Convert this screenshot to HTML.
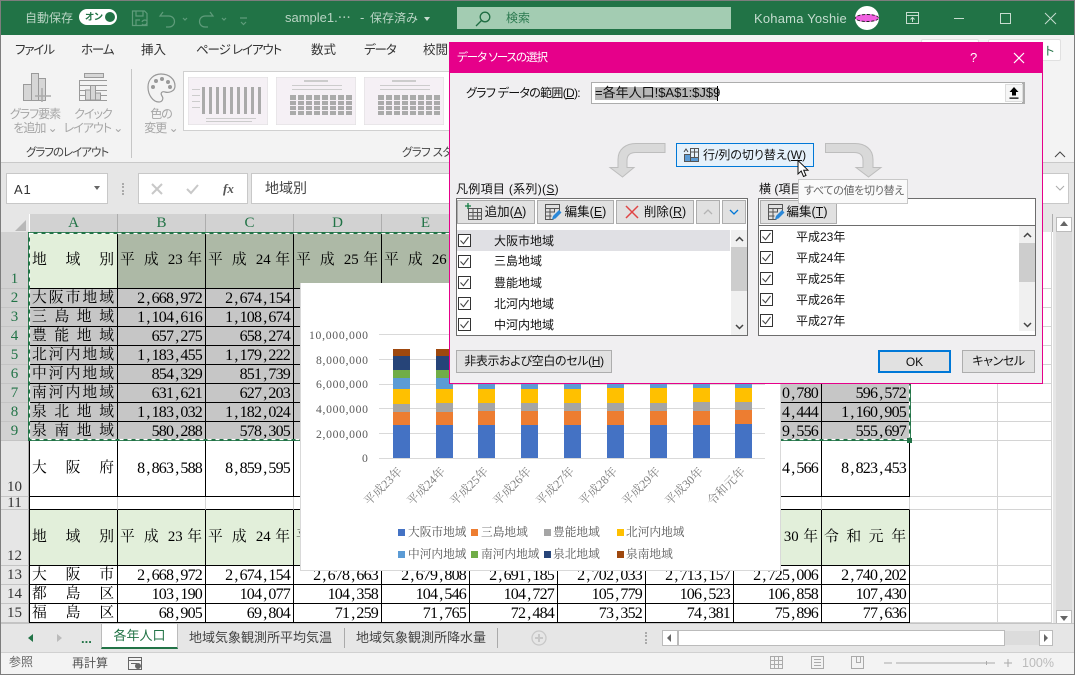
<!DOCTYPE html>
<html lang="ja"><head><meta charset="utf-8"><title>Excel</title>
<style>
*{box-sizing:border-box}
html,body{margin:0;padding:0}
body{width:1075px;height:675px;position:relative;overflow:hidden;background:#e6e6e6;font-family:"Liberation Sans","Noto Sans CJK JP",sans-serif;font-size:12px;color:#222;font-feature-settings:"palt"}
.a{position:absolute;white-space:nowrap}
svg{position:absolute;overflow:visible}
#sheet{position:absolute;left:0;top:214px;width:1053px;height:409px;overflow:hidden;background:#fff}
table{position:absolute;left:29px;top:18px;border-collapse:separate;border-spacing:0;table-layout:fixed;width:1023px;font-family:"Liberation Serif","Noto Serif CJK JP",serif;font-size:16px;letter-spacing:-.8px;color:#000;font-feature-settings:normal}
td{border-right:1px solid #000;border-bottom:1px solid #000;padding:0 3px 0 2px;overflow:hidden;white-space:nowrap;text-align:right;line-height:15px}
td:first-child{border-left:1px solid #000}
td.g{border-right-color:#d4d4d4}
td.n{border-right-color:#d4d4d4;border-bottom-color:#d4d4d4}
td.h{background:#adb9a6}
td.s{background:#c6c6c6}
td.l{background:#e2efda}
td.j{text-align:justify;text-align-last:justify;word-spacing:-3.7px;font-size:14.8px;letter-spacing:0}
td i{font-style:normal;margin:0 2px}
.rh{position:absolute;left:1px;width:28px;background:#e6e6e6;border-bottom:1px solid #c4c4c4;border-right:1px solid #ababab;font-family:"Liberation Serif",serif;font-size:15px;text-align:center;color:#333;line-height:17px;display:flex;align-items:flex-end;justify-content:center}
.rh.on{background:#d2d2d2;color:#217346;border-right-color:#adadad}
.ch{position:absolute;top:0;height:18px;width:88px;background:#d2d2d2;border-right:1px solid #adadad;color:#217346;font-family:"Liberation Serif",serif;font-size:15px;text-align:center;line-height:19px}
.btn{position:absolute;background:#e1e1e1;border:1px solid #adadad;color:#111;text-align:center;white-space:nowrap}
.u{text-decoration:underline}
.lb{position:absolute;white-space:nowrap;color:#111;font-size:12px;line-height:16px}
.rb{position:absolute;text-align:center;color:#a6a6a6;font-size:12px;line-height:14px;white-space:nowrap;letter-spacing:-1px}
.tab{position:absolute;top:50px;white-space:nowrap;color:#333;font-size:12.500px;line-height:1;transform:translateY(-6px)}
.k{letter-spacing:-1.100px}
</style></head><body>
<svg width="0" height="0" style="position:absolute"><defs>
<symbol id="ck" viewBox="0 0 13 13"><rect x=".5" y=".5" width="12" height="12" fill="#fff" stroke="#333"/><path d="M2.5 6.5l3 3.2 5-6.7" fill="none" stroke="#444" stroke-width="1.1"/></symbol>
<symbol id="ed" viewBox="0 0 18 18"><path d="M1.5 1.5h14v4h-14zM1.500 5.500v11h8M6 5.500v11M10.500 5.500v4M15.500 5.500v3M1.500 9h9M1.500 13h6" fill="none" stroke="#555"/><path d="M8 16.500l1-3.500 6-6 2.500 2.500-6 6z" fill="#2b88d8"/></symbol>
<symbol id="th" viewBox="0 0 80 48"><rect width="80" height="48" fill="#f5f0f5" stroke="#ddd"/><g fill="#aaa"><rect x="14" y="10" width="3" height="27"/><rect x="21" y="10" width="3" height="27"/><rect x="28" y="10" width="3" height="27"/><rect x="35" y="10" width="3" height="27"/><rect x="42" y="10" width="3" height="27"/><rect x="49" y="10" width="3" height="27"/><rect x="56" y="10" width="3" height="27"/><rect x="63" y="10" width="3" height="27"/><rect x="70" y="10" width="3" height="27"/></g><g fill="#ccc"><rect x="18" y="41" width="50" height="1"/><rect x="18" y="44" width="46" height="1"/><rect x="4" y="12" width="8" height="1"/><rect x="4" y="18" width="8" height="1"/><rect x="4" y="24" width="8" height="1"/><rect x="4" y="30" width="8" height="1"/></g></symbol>
<symbol id="th2" viewBox="0 0 80 48"><rect width="80" height="48" fill="#f5f0f5" stroke="#ddd"/><g fill="#ccc"><rect x="28" y="3" width="24" height="2"/><rect x="16" y="8" width="50" height="1"/><rect x="16" y="12" width="50" height="1"/></g><g fill="#aaa"><rect x="14" y="18" width="6" height="20"/><rect x="22" y="18" width="6" height="20"/><rect x="30" y="18" width="6" height="20"/><rect x="38" y="18" width="6" height="20"/><rect x="46" y="18" width="6" height="20"/><rect x="54" y="18" width="6" height="20"/><rect x="62" y="18" width="6" height="20"/><rect x="70" y="18" width="6" height="20"/></g><g fill="#f5f0f5"><rect x="4" y="23" width="74" height="1"/><rect x="4" y="28" width="74" height="1"/><rect x="4" y="33" width="74" height="1"/></g></symbol>
</defs></svg>

<!-- title bar -->
<div class="a" style="left:0;top:0;width:1075px;height:35px;background:#217346"></div>
<div class="a" style="left:25px;top:10px;color:#b9d4c4;font-size:12px;line-height:16px">自動保存</div>
<div class="a" style="left:79px;top:9px;width:38px;height:16px;border-radius:8px;background:#fff"></div>
<div class="a" style="left:85px;top:11px;color:#217346;font-size:9.500px;font-weight:bold;line-height:13px">オン</div>
<div class="a" style="left:105px;top:12px;width:10px;height:10px;border-radius:5px;background:#217346"></div>
<svg style="left:131px;top:10px" width="120" height="18" fill="none" stroke="#5f9c7b" stroke-width="1.200"><path d="M1.500 1h12l2.500 2.500v12H1.500zM5 1v5h7V1M5 15v-5h4"/><path d="M11 12a3 3 0 0 1 5-1M16 13a3 3 0 0 1-5 1"/><path d="M32 2l-3 4h6M29.500 6H38a5 5 0 0 1 0 11h-3"/><path d="M52 8l2 2 2-2"/><path d="M79 2l3 4h-6M82.500 6H74a5 5 0 0 0 0 11h3"/><path d="M91 8l2 2 2-2"/><path d="M109 8h7M110 12l2.500 2.500 2.500-2.500"/></svg>
<div class="a" style="left:285px;top:10px;color:#b9d4c4;font-size:13px;line-height:16px">sample1.⋯</div>
<div class="a" style="left:360px;top:10px;color:#b9d4c4;font-size:13px;line-height:16px">-</div>
<div class="a" style="left:370px;top:10px;color:#b9d4c4;font-size:12px;line-height:16px">保存済み</div>
<div class="a" style="left:424px;top:17px;width:0;height:0;border:3.500px solid transparent;border-top:4px solid #c6dccf"></div>
<div class="a" style="left:457px;top:7px;width:274px;height:22px;background:#a3ccb2"></div>
<svg style="left:475px;top:11px" width="16" height="16" fill="none" stroke="#1f6d43" stroke-width="1.300"><circle cx="10" cy="6" r="4.800"/><path d="M6.500 9.500L1 15"/></svg>
<div class="a" style="left:506px;top:10px;color:#2c7a50;font-size:12px;line-height:16px">検索</div>
<div class="a" style="left:754px;top:11px;color:#c4dccf;font-size:13px;line-height:16px;width:89px;letter-spacing:.2px">Kohama Yoshie</div>
<div class="a" style="left:855px;top:6px;width:24px;height:24px;border-radius:12px;background:#fff"></div>
<div class="a" style="left:855px;top:14px;width:24px;height:8px;border-radius:50%;background:#f060e0;border:1px dashed #222"></div>
<svg style="left:905px;top:10px" width="150" height="16" fill="none" stroke="#c6dccf"><path d="M1.500 2.500h12v11h-12zM1.500 5.500h12M7.500 12V7.500M5.500 9.500l2-2 2 2"/><path d="M49 8.500h10"/><path d="M95.500 3.500h10v10h-10z"/><path d="M140 3l11 11M151 3l-11 11"/></svg>

<!-- ribbon -->
<div class="a" style="left:0;top:35px;width:1075px;height:128px;background:#f3f3f3;border-bottom:1px solid #c9c9c9"></div>
<div class="tab k" style="left:15px">ファイル</div>
<div class="tab k" style="left:81px">ホーム</div>
<div class="tab" style="left:141px">挿入</div>
<div class="tab k" style="left:196px">ページ レイアウト</div>
<div class="tab" style="left:311px">数式</div>
<div class="tab k" style="left:364px">データ</div>
<div class="tab" style="left:423px">校閲</div>
<div class="a" style="left:921px;top:39px;width:58px;height:22px;background:#fff;border:1px solid #e0e0e0;border-radius:2px"></div>
<div class="a" style="left:988px;top:39px;width:73px;height:22px;background:#fff;border:1px solid #e0e0e0;border-radius:2px"></div>
<div class="a" style="left:1045px;top:44px;color:#217346;font-size:12px;line-height:14px">ト</div>
<svg style="left:23px;top:72px" width="30" height="32" fill="#d6d6d6" stroke="#9a9a9a"><path d="M.5 12.500h8v16h-8zM8.500 1.500h7v27h-7zM15.500 6.500h7v22h-7z"/><path d="M19 16v14M12 24h16" stroke="#aaa" stroke-width="1.500" fill="none"/></svg>
<svg style="left:79px;top:72px" width="30" height="32" fill="none" stroke="#9a9a9a"><path d="M5.500 1.500h19v4h-19z" fill="#d6d6d6"/><path d="M1 8.500h27M1 13.500h27M1 18.500h27M1 23.500h27M.5 8v20.500h27.500"/><path d="M6.500 28v-10h5v10zM11.500 28V13.500h5V28zM16.500 28v-7h5v7z" fill="#d6d6d6"/></svg>
<svg style="left:147px;top:73px" width="30" height="30" fill="none" stroke="#999" stroke-width="1.200"><path d="M14 1c8 0 14 5 14 12 0 6-7 7-10 6-3-1-5 1-3 4 2 3 0 6-3 6C6 29 1 22 1 14 1 6 7 1 14 1z"/><g fill="#999" stroke="none"><circle cx="9" cy="8" r="2"/><circle cx="15" cy="6" r="2"/><circle cx="21" cy="9" r="2"/><circle cx="23" cy="14" r="2"/><circle cx="6" cy="14" r="2"/></g></svg>
<div class="rb" style="left:5px;top:107px;width:60px">グラフ要素<br>を追加 ⌄</div>
<div class="rb" style="left:60px;top:107px;width:66px">クイック<br>レイアウト ⌄</div>
<div class="rb" style="left:136px;top:107px;width:50px">色の<br>変更 ⌄</div>
<div class="a" style="left:131px;top:69px;width:1px;height:89px;background:#c6c6c6"></div>
<div class="a" style="left:183px;top:71px;width:270px;height:60px;background:#fff;border:1px solid #d0d0d0"></div>
<svg style="left:188px;top:77px" width="80" height="48"><use href="#th"/></svg>
<svg style="left:276px;top:77px" width="80" height="48"><use href="#th2"/></svg>
<svg style="left:364px;top:77px" width="80" height="48"><use href="#th2"/></svg>
<div class="a" style="left:26px;top:146px;color:#444;font-size:11.500px;line-height:14px;letter-spacing:-1px">グラフのレイアウト</div>
<div class="a" style="left:402px;top:146px;color:#444;font-size:11.500px;line-height:14px;letter-spacing:-.6px">グラフ スタイル</div>
<svg style="left:1054px;top:151px" width="12" height="8" fill="none" stroke="#444"><path d="M1 6l5-5 5 5"/></svg>

<!-- formula bar -->
<div class="a" style="left:6px;top:173px;width:102px;height:31px;background:#fff;border:1px solid #c8c8c8"></div>
<div class="a" style="left:14px;top:182px;font-size:13px;line-height:16px;color:#333;letter-spacing:.8px">A1</div>
<div class="a" style="left:94px;top:186px;width:0;height:0;border:3.500px solid transparent;border-top:4px solid #666"></div>
<div class="a" style="left:122px;top:183px;width:2px;height:12px;border-left:2px dotted #aaa"></div>
<div class="a" style="left:138px;top:173px;width:110px;height:31px;background:#fff;border:1px solid #c8c8c8"></div>
<svg style="left:151px;top:183px" width="60" height="12" fill="none" stroke-width="2"><path d="M1 1l10 10M11 1L1 11" stroke="#c8c8c8"/><path d="M36 6l4 4 7-8" stroke="#c8c8c8"/></svg>
<div class="a" style="left:223px;top:181px;font-family:'Liberation Serif',serif;font-style:italic;font-weight:bold;font-size:13px;color:#555;line-height:16px">fx</div>
<div class="a" style="left:251px;top:173px;width:818px;height:31px;background:#fff;border:1px solid #c8c8c8"></div>
<div class="a" style="left:265px;top:180px;font-size:14px;line-height:16px;color:#444">地域別</div>
<svg style="left:1055px;top:185px" width="10" height="7" fill="none" stroke="#aaa"><path d="M1 1l4 4 4-4"/></svg>

<!-- sheet -->
<div id="sheet">
<div class="a" style="left:1px;top:0;width:28px;height:18px;background:#e6e6e6"></div>
<div class="a" style="left:15px;top:6px;width:0;height:0;border-left:11px solid transparent;border-bottom:11px solid #b8b8b8"></div>
<div class="ch" style="left:30px">A</div><div class="ch" style="left:118px">B</div><div class="ch" style="left:206px">C</div><div class="ch" style="left:294px">D</div><div class="ch" style="left:382px">E</div><div class="ch" style="left:470px">F</div><div class="ch" style="left:558px">G</div><div class="ch" style="left:646px">H</div><div class="ch" style="left:734px">I</div><div class="ch" style="left:822px">J</div>
<div class="ch" style="left:910px;background:#e6e6e6;color:#333">K</div><div class="ch" style="left:998px;width:55px;background:#e6e6e6;color:#333">L</div>
<div class="rh on" style="top:18px;height:57px">1</div>
<div class="rh on" style="top:75px;height:19px">2</div>
<div class="rh on" style="top:94px;height:19px">3</div>
<div class="rh on" style="top:113px;height:19px">4</div>
<div class="rh on" style="top:132px;height:19px">5</div>
<div class="rh on" style="top:151px;height:19px">6</div>
<div class="rh on" style="top:170px;height:19px">7</div>
<div class="rh on" style="top:189px;height:19px">8</div>
<div class="rh on" style="top:208px;height:19px">9</div>
<div class="rh" style="top:227px;height:56px">10</div>
<div class="rh" style="top:283px;height:13px;line-height:12px">11</div>
<div class="rh" style="top:296px;height:56px">12</div>
<div class="rh" style="top:352px;height:19px">13</div>
<div class="rh" style="top:371px;height:19px">14</div>
<div class="rh" style="top:390px;height:19px">15</div>
<table><colgroup><col style="width:89px"><col style="width:88px"><col style="width:88px"><col style="width:88px"><col style="width:88px"><col style="width:88px"><col style="width:88px"><col style="width:88px"><col style="width:88px"><col style="width:88px"><col style="width:88px"><col style="width:54px"></colgroup>
<tr style="height:57px"><td class="l j">地 域 別</td><td class="h j">平 成 23 年</td><td class="h j">平 成 24 年</td><td class="h j">平 成 25 年</td><td class="h j">平 成 26 年</td><td class="h j">平 成 27 年</td><td class="h j">平 成 28 年</td><td class="h j">平 成 29 年</td><td class="h j">平 成 30 年</td><td class="h j">令 和 元 年</td><td class="n"></td><td class="n"></td></tr>
<tr style="height:19px"><td class="s j">大 阪 市 地 域</td><td class="s">2<i>,</i>668<i>,</i>972</td><td class="s">2<i>,</i>674<i>,</i>154</td><td class="s"></td><td class="s"></td><td class="s"></td><td class="s"></td><td class="s"></td><td class="s"></td><td class="s"></td><td class="n"></td><td class="n"></td></tr>
<tr style="height:19px"><td class="s j">三 島 地 域</td><td class="s">1<i>,</i>104<i>,</i>616</td><td class="s">1<i>,</i>108<i>,</i>674</td><td class="s"></td><td class="s"></td><td class="s"></td><td class="s"></td><td class="s"></td><td class="s"></td><td class="s"></td><td class="n"></td><td class="n"></td></tr>
<tr style="height:19px"><td class="s j">豊 能 地 域</td><td class="s">657<i>,</i>275</td><td class="s">658<i>,</i>274</td><td class="s"></td><td class="s"></td><td class="s"></td><td class="s"></td><td class="s"></td><td class="s"></td><td class="s"></td><td class="n"></td><td class="n"></td></tr>
<tr style="height:19px"><td class="s j">北 河 内 地 域</td><td class="s">1<i>,</i>183<i>,</i>455</td><td class="s">1<i>,</i>179<i>,</i>222</td><td class="s"></td><td class="s"></td><td class="s"></td><td class="s"></td><td class="s"></td><td class="s"></td><td class="s"></td><td class="n"></td><td class="n"></td></tr>
<tr style="height:19px"><td class="s j">中 河 内 地 域</td><td class="s">854<i>,</i>329</td><td class="s">851<i>,</i>739</td><td class="s"></td><td class="s"></td><td class="s"></td><td class="s"></td><td class="s"></td><td class="s"></td><td class="s"></td><td class="n"></td><td class="n"></td></tr>
<tr style="height:19px"><td class="s j">南 河 内 地 域</td><td class="s">631<i>,</i>621</td><td class="s">627<i>,</i>203</td><td class="s"></td><td class="s"></td><td class="s"></td><td class="s"></td><td class="s"></td><td class="s">0<i>,</i>780</td><td class="s">596<i>,</i>572</td><td class="n"></td><td class="n"></td></tr>
<tr style="height:19px"><td class="s j">泉 北 地 域</td><td class="s">1<i>,</i>183<i>,</i>032</td><td class="s">1<i>,</i>182<i>,</i>024</td><td class="s"></td><td class="s"></td><td class="s"></td><td class="s"></td><td class="s"></td><td class="s">4<i>,</i>444</td><td class="s">1<i>,</i>160<i>,</i>905</td><td class="n"></td><td class="n"></td></tr>
<tr style="height:19px"><td class="s j">泉 南 地 域</td><td class="s">580<i>,</i>288</td><td class="s">578<i>,</i>305</td><td class="s"></td><td class="s"></td><td class="s"></td><td class="s"></td><td class="s"></td><td class="s">9<i>,</i>556</td><td class="s">555<i>,</i>697</td><td class="n"></td><td class="n"></td></tr>
<tr style="height:56px"><td class="j">大 阪 府</td><td>8<i>,</i>863<i>,</i>588</td><td>8<i>,</i>859<i>,</i>595</td><td></td><td></td><td></td><td></td><td></td><td>4<i>,</i>566</td><td>8<i>,</i>823<i>,</i>453</td><td class="n"></td><td class="n"></td></tr>
<tr style="height:13px"><td class="g"></td><td class="g"></td><td class="g"></td><td class="g"></td><td class="g"></td><td class="g"></td><td class="g"></td><td class="g"></td><td class="g"></td><td class="g"></td><td class="n"></td><td class="n"></td></tr>
<tr style="height:56px"><td class="l j">地 域 別</td><td class="l j">平 成 23 年</td><td class="l j">平 成 24 年</td><td class="l j">平 成 25 年</td><td class="l j">平 成 26 年</td><td class="l j">平 成 27 年</td><td class="l j">平 成 28 年</td><td class="l j">平 成 29 年</td><td class="l j">平 成 30 年</td><td class="l j">令 和 元 年</td><td class="n"></td><td class="n"></td></tr>
<tr style="height:19px"><td class="j">大 阪 市</td><td>2<i>,</i>668<i>,</i>972</td><td>2<i>,</i>674<i>,</i>154</td><td>2<i>,</i>678<i>,</i>663</td><td>2<i>,</i>679<i>,</i>808</td><td>2<i>,</i>691<i>,</i>185</td><td>2<i>,</i>702<i>,</i>033</td><td>2<i>,</i>713<i>,</i>157</td><td>2<i>,</i>725<i>,</i>006</td><td>2<i>,</i>740<i>,</i>202</td><td class="n"></td><td class="n"></td></tr>
<tr style="height:19px"><td class="j">都 島 区</td><td>103<i>,</i>190</td><td>104<i>,</i>077</td><td>104<i>,</i>358</td><td>104<i>,</i>546</td><td>104<i>,</i>727</td><td>105<i>,</i>779</td><td>106<i>,</i>523</td><td>106<i>,</i>858</td><td>107<i>,</i>430</td><td class="n"></td><td class="n"></td></tr>
<tr style="height:19px"><td class="j">福 島 区</td><td>68<i>,</i>905</td><td>69<i>,</i>804</td><td>71<i>,</i>259</td><td>71<i>,</i>765</td><td>72<i>,</i>484</td><td>73<i>,</i>352</td><td>74<i>,</i>381</td><td>75<i>,</i>896</td><td>77<i>,</i>636</td><td class="n"></td><td class="n"></td></tr>
<tr style="height:19px"><td></td><td></td><td></td><td></td><td></td><td></td><td></td><td></td><td></td><td></td><td class="n"></td><td class="n"></td></tr>
</table>
<!-- marching ants -->
<div class="a" style="left:28px;top:18px;width:883px;height:209px;border:2px solid #217346"></div>
<svg style="left:0;top:0" width="1053" height="409"><rect x="29.500" y="19.500" width="880" height="206" fill="none" stroke="#fff" stroke-width="1.200" stroke-dasharray="4 4"/></svg>
<div class="a" style="left:907px;top:224px;width:5px;height:5px;background:#217346"></div>
</div>

<!-- v scrollbar -->
<div class="a" style="left:1053px;top:214px;width:22px;height:410px;background:#e6e6e6"></div>
<div class="a" style="left:1056px;top:231px;width:16px;height:379px;background:#dcdcdc"></div>
<div class="a" style="left:1056px;top:217px;width:16px;height:15px;background:#fff;border:1px solid #bbb"></div>
<div class="a" style="left:1060px;top:221px;width:0;height:0;border:4px solid transparent;border-bottom:5px solid #666;border-top:0"></div>
<div class="a" style="left:1056px;top:610px;width:16px;height:15px;background:#fff;border:1px solid #bbb"></div>
<div class="a" style="left:1060px;top:616px;width:0;height:0;border:4px solid transparent;border-top:5px solid #666;border-bottom:0"></div>

<!-- chart -->
<div class="a" style="left:300px;top:283px;width:481px;height:288px;background:#fff;border-left:1px solid #d9d9d9;border-bottom:1px solid #d9d9d9;border-right:1px solid #d9d9d9"></div>
<svg style="left:0;top:0;font-feature-settings:normal" width="1075" height="675">
<g stroke="#d9d9d9"><path d="M379 334.500H765M379 359.500H765M379 384.500H765M379 408.500H765M379 433.500H765M379 458.500H765"/></g>
<g font-family="'Liberation Serif','Noto Serif CJK JP',serif" font-size="11.700" fill="#595959">
<text x="309" y="339" textLength="59">10,000,000</text><text x="316" y="364" textLength="52">8,000,000</text><text x="316" y="388" textLength="52">6,000,000</text><text x="316" y="413" textLength="52">4,000,000</text><text x="316" y="438" textLength="52">2,000,000</text><text x="362" y="462">0</text>
<g text-anchor="end" fill="#7f7f7f" font-size="12">
<text transform="translate(403 472) rotate(-45)">平成23年</text>
<text transform="translate(446 472) rotate(-45)">平成24年</text>
<text transform="translate(489 472) rotate(-45)">平成25年</text>
<text transform="translate(532 472) rotate(-45)">平成26年</text>
<text transform="translate(575 472) rotate(-45)">平成27年</text>
<text transform="translate(618 472) rotate(-45)">平成28年</text>
<text transform="translate(661 472) rotate(-45)">平成29年</text>
<text transform="translate(704 472) rotate(-45)">平成30年</text>
<text transform="translate(746 472) rotate(-45)">令和元年</text>
</g>
<g font-size="11.700">
<text x="408" y="536">大阪市地域</text><text x="481" y="536">三島地域</text><text x="553" y="536">豊能地域</text><text x="626" y="536">北河内地域</text>
<text x="408" y="558">中河内地域</text><text x="481" y="558">南河内地域</text><text x="553" y="558">泉北地域</text><text x="626" y="558">泉南地域</text>
</g></g>
<g><rect x="398" y="529" width="7" height="7" fill="#4472c4"/><rect x="471" y="529" width="7" height="7" fill="#ed7d31"/><rect x="544" y="529" width="7" height="7" fill="#a5a5a5"/><rect x="617" y="529" width="7" height="7" fill="#ffc000"/><rect x="398" y="551" width="7" height="7" fill="#5b9bd5"/><rect x="471" y="551" width="7" height="7" fill="#70ad47"/><rect x="544" y="551" width="7" height="7" fill="#264478"/><rect x="617" y="551" width="7" height="7" fill="#9e480e"/></g>
<g fill="#4472c4"><rect x="393" y="425" width="17" height="33"/><rect x="436" y="425" width="17" height="33"/><rect x="478" y="425" width="17" height="33"/><rect x="521" y="425" width="17" height="33"/><rect x="564" y="425" width="17" height="33"/><rect x="607" y="425" width="17" height="33"/><rect x="650" y="425" width="17" height="33"/><rect x="693" y="425" width="17" height="33"/><rect x="735" y="424" width="17" height="34"/></g>
<g fill="#ed7d31"><rect x="393" y="412" width="17" height="13"/><rect x="436" y="412" width="17" height="13"/><rect x="478" y="411" width="17" height="14"/><rect x="521" y="411" width="17" height="14"/><rect x="564" y="411" width="17" height="14"/><rect x="607" y="411" width="17" height="14"/><rect x="650" y="411" width="17" height="14"/><rect x="693" y="411" width="17" height="14"/><rect x="735" y="410" width="17" height="14"/></g>
<g fill="#a5a5a5"><rect x="393" y="404" width="17" height="8"/><rect x="436" y="403" width="17" height="9"/><rect x="478" y="403" width="17" height="8"/><rect x="521" y="403" width="17" height="8"/><rect x="564" y="403" width="17" height="8"/><rect x="607" y="403" width="17" height="8"/><rect x="650" y="403" width="17" height="8"/><rect x="693" y="402" width="17" height="9"/><rect x="735" y="402" width="17" height="8"/></g>
<g fill="#ffc000"><rect x="393" y="389" width="17" height="15"/><rect x="436" y="389" width="17" height="14"/><rect x="478" y="389" width="17" height="14"/><rect x="521" y="389" width="17" height="14"/><rect x="564" y="389" width="17" height="14"/><rect x="607" y="388" width="17" height="15"/><rect x="650" y="388" width="17" height="15"/><rect x="693" y="388" width="17" height="14"/><rect x="735" y="388" width="17" height="14"/></g>
<g fill="#5b9bd5"><rect x="393" y="378" width="17" height="11"/><rect x="436" y="378" width="17" height="11"/><rect x="478" y="378" width="17" height="11"/><rect x="521" y="378" width="17" height="11"/><rect x="564" y="378" width="17" height="11"/><rect x="607" y="378" width="17" height="10"/><rect x="650" y="378" width="17" height="10"/><rect x="693" y="378" width="17" height="10"/><rect x="735" y="378" width="17" height="10"/></g>
<rect x="393" y="370" width="17" height="8" fill="#70ad47"/><rect x="436" y="370" width="17" height="8" fill="#70ad47"/>
<rect x="393" y="356" width="17" height="14" fill="#264478"/><rect x="436" y="356" width="17" height="14" fill="#264478"/>
<rect x="393" y="349" width="17" height="7" fill="#9e480e"/><rect x="436" y="349" width="17" height="7" fill="#9e480e"/>
</svg>

<!-- tab bar -->
<div class="a" style="left:0;top:623px;width:1075px;height:29px;background:#e6e6e6;border-top:1px solid #c4c4c4"></div>
<div class="a" style="left:28px;top:634px;width:0;height:0;border:4px solid transparent;border-right:5px solid #217346;border-left:0"></div>
<div class="a" style="left:57px;top:634px;width:0;height:0;border:4px solid transparent;border-left:5px solid #bbb;border-right:0"></div>
<div class="a" style="left:81px;top:632px;font-weight:bold;color:#217346;font-size:13px;line-height:14px">...</div>
<div class="a" style="left:101px;top:624px;width:77px;height:25px;background:#fff;border-left:1px solid #bbb;border-right:1px solid #bbb;border-bottom:2px solid #217346;color:#217346;text-align:center;line-height:23px;font-size:13px">各年人口</div>
<div class="a" style="left:189px;top:630px;color:#444;font-size:13px;line-height:16px">地域気象観測所平均気温</div>
<div class="a" style="left:344px;top:628px;width:1px;height:20px;background:#aaa"></div>
<div class="a" style="left:356px;top:630px;color:#444;font-size:13px;line-height:16px">地域気象観測所降水量</div>
<div class="a" style="left:497px;top:628px;width:1px;height:20px;background:#aaa"></div>
<svg style="left:531px;top:630px" width="16" height="16" fill="none" stroke="#c8c8c8" stroke-width="1.300"><circle cx="8" cy="8" r="7"/><path d="M4 8h8M8 4v8" stroke-width="2"/></svg>
<div class="a" style="left:645px;top:632px;width:2px;height:12px;border-left:2px dotted #aaa"></div>
<div class="a" style="left:662px;top:630px;width:16px;height:16px;background:#fff;border:1px solid #bbb"></div>
<div class="a" style="left:667px;top:634px;width:0;height:0;border:4px solid transparent;border-right:4px solid #666;border-left:0"></div>
<div class="a" style="left:678px;top:630px;width:327px;height:16px;background:#fff;border:1px solid #bbb"></div>
<div class="a" style="left:1005px;top:631px;width:34px;height:14px;background:#dcdcdc"></div>
<div class="a" style="left:1039px;top:630px;width:14px;height:16px;background:#fff;border:1px solid #bbb"></div>
<div class="a" style="left:1044px;top:634px;width:0;height:0;border:4px solid transparent;border-left:4px solid #666;border-right:0"></div>

<!-- status bar -->
<div class="a" style="left:0;top:652px;width:1075px;height:23px;background:#f3f3f3;border-top:1px solid #d0d0d0"></div>
<div class="a" style="left:9px;top:655px;color:#666;font-size:12px;line-height:14px">参照</div>
<div class="a" style="left:72px;top:656px;color:#555;font-size:12px;line-height:14px">再計算</div>
<svg style="left:128px;top:657px" width="15" height="14" fill="none" stroke="#666"><path d="M.5.500h13v12H.500zM.5 3.500h13M3 6.500h6"/><circle cx="10" cy="9" r="2.500" fill="#666"/></svg>
<svg style="left:770px;top:656px" width="260" height="14" fill="none" stroke="#aaa"><path d="M.5.500h12v12H.500zM.5 4.500h12M.5 8.500h12M4.500.5v12M8.500.5v12"/><path d="M41.500.5h12v12h-12zM44 3.500h7M44 6.500h7M44 9.500h7"/><path d="M81.500.5h12v12h-12zM86.500.5v6h4v-6"/><path d="M114 7h8M126 7h99M216.500 5v4M234 7h8M238 3v8"/></svg>
<div class="a" style="left:1022px;top:655px;color:#bbb;font-size:12.500px;line-height:16px">100%</div>
<div class="a" style="left:0;top:0;width:1075px;height:675px;border:1px solid #7d7d7d;pointer-events:none"></div>

<!-- dialog -->
<div class="a" style="left:449px;top:42px;width:594px;height:342px;background:#f0eff1;border:1px solid #e6008a;border-top:0"></div>
<div class="a" style="left:449px;top:42px;width:594px;height:31px;background:#e6008a"></div>
<div class="a" style="left:457px;top:50px;color:#fff;font-size:11.500px;line-height:16px;letter-spacing:-1px">データ ソースの選択</div>
<div class="a" style="left:970px;top:49px;color:#fff;font-size:13px;line-height:18px">?</div>
<svg style="left:1013px;top:52px" width="12" height="12" fill="none" stroke="#fff" stroke-width="1.200"><path d="M1 1l10 10M11 1L1 11"/></svg>
<div class="lb" style="left:466px;top:85px;letter-spacing:-.7px">グラフ データの範囲(<span class="u">D</span>):</div>
<div class="a" style="left:591px;top:82px;width:434px;height:22px;background:#fff;border:1px solid #adadad;border-width:1px 3px 1px 1px"></div>
<div class="a" style="left:595px;top:87px;width:122px;height:13px;background:#b8b8b8"></div>
<div class="a" style="left:717px;top:86px;width:1px;height:15px;background:#000"></div>
<div class="a" style="left:595px;top:85px;font-size:13px;line-height:16px;color:#111;width:122px">=各年人口!$A$1:$J$9</div>
<div class="a" style="left:1005px;top:84px;width:18px;height:18px;background:#f6f6f6;border:1px solid #ddd"></div>
<svg style="left:1009px;top:87px" width="10" height="12" fill="#000"><path d="M5 0l4.500 5H7v3.500H3V5H.5zM.5 10.500h9v1.200h-9z"/></svg>
<svg style="left:608px;top:142px" width="60" height="36" fill="#d9d9d9" stroke="#bdbdbd"><path d="M57 1.500v9H28c-6 0-9 3-9 8v7h7L14.500 35 2 25.500h8v-8C10 7 18 1.500 28 1.500z"/></svg>
<svg style="left:824px;top:142px" width="60" height="36" fill="#d9d9d9" stroke="#bdbdbd"><path d="M1.500 1.500v9H30c6 0 9 3 9 8v7h-7L44.500 35 57 25.500h-8v-8C49 7 41 1.500 31 1.500z"/></svg>
<div class="a" style="left:676px;top:143px;width:138px;height:24px;background:#e5f1fb;border:1px solid #0078d7"></div>
<svg style="left:683px;top:147px" width="17" height="16" fill="none" stroke="#555"><path d="M7.500 1.500h8v13H1.500V7.500h6zM1.500 10.500h14M7.500 7.500v7M11.500 1.500v13M7.500 5h8" /><rect x="2" y="8" width="5" height="6" fill="#5b9bd5" stroke="none"/><rect x="8" y="11" width="7" height="3" fill="#5b9bd5" stroke="none"/><path d="M1 5l2-3 2 3" stroke="#444"/></svg>
<div class="a" style="left:703px;top:147px;font-size:12px;line-height:16px;color:#111">行/列の切り替え(<span class="u">W</span>)</div>
<div class="lb" style="left:456px;top:181px;letter-spacing:.3px">凡例項目 (系列)(<span class="u">S</span>)</div>
<div class="lb" style="left:759px;top:181px">横 (項目軸ラベル)(<span class="u">C</span>)</div>

<!-- left list -->
<div class="a" style="left:456px;top:198px;width:292px;height:138px;background:#fff;border:1px solid #6d6d6d"></div>
<div class="btn" style="left:457px;top:200px;width:78px;height:24px;line-height:22px;padding-left:19px;font-size:12.500px">追加(<span class="u">A</span>)</div>
<svg style="left:465px;top:203px" width="18" height="18" fill="none" stroke="#555"><path d="M3.500 5.500h13v11h-13zM3.500 9.500h13M3.500 13h13M8 5.500v11M12.500 5.500v11"/><path d="M0 3h6M3 0v6" stroke="#107c41" stroke-width="1.300"/></svg>
<div class="btn" style="left:537px;top:200px;width:77px;height:24px;line-height:22px;padding-left:20px;font-size:12.500px">編集(<span class="u">E</span>)</div>
<svg style="left:544px;top:203px" width="18" height="18"><use href="#ed"/></svg>
<div class="btn" style="left:616px;top:200px;width:78px;height:24px;line-height:22px;padding-left:20px;font-size:12.500px">削除(<span class="u">R</span>)</div>
<svg style="left:625px;top:205px" width="14" height="14" fill="none" stroke="#e04545" stroke-width="1.500"><path d="M1 1l12 12M13 1L1 13"/></svg>
<div class="btn" style="left:696px;top:200px;width:24px;height:24px"></div>
<svg style="left:703px;top:208px" width="10" height="7" fill="none" stroke="#b4b4b4" stroke-width="1.300"><path d="M1 6l4-4 4 4"/></svg>
<div class="btn" style="left:722px;top:200px;width:24px;height:24px"></div>
<svg style="left:729px;top:209px" width="10" height="7" fill="none" stroke="#0078d7" stroke-width="1.300"><path d="M1 1l4 4 4-4"/></svg>
<div class="a" style="left:457px;top:230px;width:273px;height:21px;background:#e0e0e4"></div>
<svg style="left:458px;top:234px" width="13" height="13"><use href="#ck"/></svg>
<svg style="left:458px;top:255px" width="13" height="13"><use href="#ck"/></svg>
<svg style="left:458px;top:276px" width="13" height="13"><use href="#ck"/></svg>
<svg style="left:458px;top:297px" width="13" height="13"><use href="#ck"/></svg>
<svg style="left:458px;top:318px" width="13" height="13"><use href="#ck"/></svg>
<div class="lb" style="left:494px;top:233px">大阪市地域</div>
<div class="lb" style="left:494px;top:253px">三島地域</div>
<div class="lb" style="left:494px;top:275px">豊能地域</div>
<div class="lb" style="left:494px;top:296px">北河内地域</div>
<div class="lb" style="left:494px;top:317px">中河内地域</div>
<div class="a" style="left:731px;top:230px;width:16px;height:105px;background:#f0f0f0"></div>
<div class="a" style="left:731px;top:247px;width:16px;height:44px;background:#cdcdcd"></div>
<svg style="left:735px;top:236px" width="9" height="6" fill="none" stroke="#444" stroke-width="1.500"><path d="M1 5l3.500-3.500L8 5"/></svg>
<svg style="left:735px;top:324px" width="9" height="6" fill="none" stroke="#444" stroke-width="1.500"><path d="M1 1l3.500 3.500L8 1"/></svg>

<!-- right list -->
<div class="a" style="left:758px;top:198px;width:278px;height:138px;background:#fff;border:1px solid #6d6d6d"></div>
<div class="btn" style="left:760px;top:200px;width:77px;height:24px;line-height:22px;padding-left:17px;font-size:12.500px">編集(<span class="u">T</span>)</div>
<svg style="left:767px;top:203px" width="18" height="18"><use href="#ed"/></svg>
<div class="a" style="left:759px;top:225px;width:276px;height:1px;background:#6d6d6d"></div>
<svg style="left:760px;top:230px" width="13" height="13"><use href="#ck"/></svg>
<svg style="left:760px;top:251px" width="13" height="13"><use href="#ck"/></svg>
<svg style="left:760px;top:272px" width="13" height="13"><use href="#ck"/></svg>
<svg style="left:760px;top:293px" width="13" height="13"><use href="#ck"/></svg>
<svg style="left:760px;top:314px" width="13" height="13"><use href="#ck"/></svg>
<div class="lb" style="left:796px;top:229px">平成23年</div>
<div class="lb" style="left:796px;top:250px">平成24年</div>
<div class="lb" style="left:796px;top:271px">平成25年</div>
<div class="lb" style="left:796px;top:292px">平成26年</div>
<div class="lb" style="left:796px;top:313px">平成27年</div>
<div class="a" style="left:1019px;top:226px;width:16px;height:105px;background:#f0f0f0"></div>
<div class="a" style="left:1019px;top:243px;width:16px;height:39px;background:#cdcdcd"></div>
<svg style="left:1023px;top:232px" width="9" height="6" fill="none" stroke="#444" stroke-width="1.500"><path d="M1 5l3.500-3.500L8 5"/></svg>
<svg style="left:1023px;top:322px" width="9" height="6" fill="none" stroke="#444" stroke-width="1.500"><path d="M1 1l3.500 3.500L8 1"/></svg>

<div class="btn" style="left:456px;top:350px;width:156px;height:23px;line-height:21px;font-size:12px;letter-spacing:-.35px">非表示および空白のセル(<span class="u">H</span>)</div>
<div class="btn" style="left:878px;top:350px;width:73px;height:23px;line-height:20px;border:2px solid #0078d7">OK</div>
<div class="btn" style="left:962px;top:350px;width:73px;height:23px;line-height:21px;letter-spacing:-.4px">キャンセル</div>

<!-- tooltip & cursor -->
<div class="a" style="left:798px;top:179px;width:110px;height:25px;background:#fafafa;border:1px solid #c8c8c8;color:#666;font-size:11px;line-height:23px;padding-left:5px;letter-spacing:-.3px">すべての値を切り替え</div>
<svg style="left:797px;top:160px" width="14" height="18"><path d="M1 .5v13.500l3.200-3 2.300 5.500 2.500-1-2.300-5.300h4.300z" fill="#fff" stroke="#111"/></svg>
</body></html>
